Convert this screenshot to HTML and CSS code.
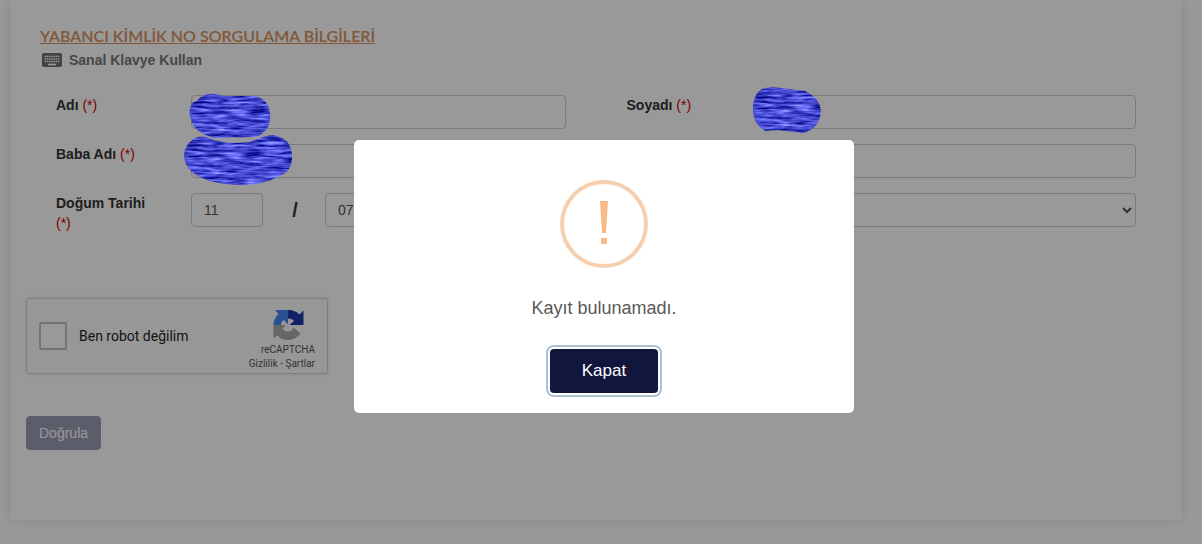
FILE: index.html
```html
<!DOCTYPE html>
<html lang="tr">
<head>
	<meta charset="utf-8">
	<title>Yabancı Kimlik No Sorgulama</title>
	<link rel="stylesheet" href="styles.css">
</head>
<body>

<svg class="defs" width="0" height="0" aria-hidden="true">
	<filter id="paint" x="0" y="0" width="100%" height="100%" color-interpolation-filters="sRGB">
		<feTurbulence type="fractalNoise" baseFrequency="0.05 0.4" numOctaves="3" seed="4" result="noise"/>
		<feColorMatrix in="noise" type="matrix" values="0.9 0 0 0 -0.18  0.9 0 0 0 -0.16  1 0 0 0 0.31  0 0 0 0 1" result="blue"/>
		<feComposite in="blue" in2="SourceGraphic" operator="in"/>
	</filter>
</svg>

<main class="card">
	<h1 class="title">YABANCI KİMLİK NO SORGULAMA BİLGİLERİ</h1>
	<a class="keyboard" href="#">
		<svg width="20" height="14" viewBox="0 0 20 14" aria-hidden="true">
			<rect width="20" height="14" rx="2" fill="#6f6f6f"/>
			<path d="M2.5 3.5h15M2.5 6h15M2.5 8.5h15" stroke="#eee" stroke-width="1.4" stroke-dasharray="1.6 0.6"/>
			<path d="M6 11.5h8" stroke="#fff" stroke-width="1.6"/>
		</svg>
		<span>Sanal Klavye Kullan</span>
	</a>

	<form>
		<div class="fields">
			<div class="field">
				<label for="adi">Adı <em>(*)</em></label>
				<input class="control" type="text" id="adi">
				<svg class="scribble scribble-name" viewBox="0 0 82 48" aria-hidden="true">
					<path d="M8 9Q14 0 27 2Q34 5 44 4L67 4Q79 8 81 20Q83 39 67 45L26 46Q13 43 6 36Q-3 22 3 11Z" filter="url(#paint)"/>
				</svg>
			</div>
			<div class="field">
				<label for="soyadi">Soyadı <em>(*)</em></label>
				<input class="control" type="text" id="soyadi">
				<svg class="scribble scribble-surname" viewBox="0 0 68 46" aria-hidden="true">
					<path d="M9 2Q16 -1 28 1L52 4Q66 10 68 23Q67 42 50 46L25 43L12 44Q-1 36 0 21Q0 7 9 2Z" filter="url(#paint)"/>
				</svg>
			</div>
			<div class="field">
				<label for="baba">Baba Adı <em>(*)</em></label>
				<input class="control" type="text" id="baba">
				<svg class="scribble scribble-father" viewBox="0 0 108 50" aria-hidden="true">
					<path d="M7 6Q13 0 22 2Q40 10 66 7Q78 1 89 0Q107 3 108 20Q109 36 96 41Q79 50 57 50Q27 49 12 40Q0 32 0 21Q0 12 7 6Z" filter="url(#paint)"/>
				</svg>
			</div>
			<div class="field">
				<label for="ana">Ana Adı <em>(*)</em></label>
				<input class="control" type="text" id="ana">
			</div>
			<div class="field">
				<label for="gun">Doğum Tarihi <em>(*)</em></label>
				<div class="date">
					<input class="control" type="text" id="gun" value="11">
					<span>/</span>
					<input class="control" type="text" value="07" aria-label="Ay">
					<span>/</span>
					<input class="control" type="text" aria-label="Yıl">
				</div>
			</div>
			<div class="field">
				<label for="cinsiyet">Cinsiyet <em>(*)</em></label>
				<select class="control" id="cinsiyet"><option></option></select>
			</div>
		</div>

		<div class="captcha">
			<input type="checkbox" id="robot">
			<label for="robot">Ben robot değilim</label>
			<div class="captcha-brand">
				<svg width="32" height="32" viewBox="0 0 64 64" aria-hidden="true">
					<path d="M63 32V3l-8 8A31 31 0 0 0 32 2v17q9 0 12 5l-9 8z" fill="#1c3aa9"/>
					<path d="M32 2H6l7 8A31 31 0 0 0 3 32h15q0-7 6-10l8 9z" fill="#4285f4"/>
					<path d="M3 32v27l7-6a31 31 0 0 0 47-4L43 37q-3 8-12 8-6 0-10-6l7-7z" fill="#ababab"/>
				</svg>
				<span>reCAPTCHA</span>
				<p><a href="#">Gizlilik</a> - <a href="#">Şartlar</a></p>
			</div>
		</div>

		<button class="submit" type="button">Doğrula</button>
	</form>
</main>

<div class="overlay">
	<div class="modal" role="dialog" aria-labelledby="message">
		<svg class="warning" width="88" height="88" viewBox="0 0 88 88" aria-hidden="true">
			<circle cx="44" cy="44" r="42" fill="none" stroke="#f6cfae" stroke-width="4"/>
			<path d="M40 21h8l-2 32h-4zM41 58h6v6h-6z" fill="#f8bb86"/>
		</svg>
		<p id="message">Kayıt bulunamadı.</p>
		<button class="close" type="button">Kapat</button>
	</div>
</div>

</body>
</html>
```
FILE: styles.css
```css
* {
	box-sizing: border-box;
}

body {
	margin: 0;
	padding: 0 21px 24px 11px;
	background: #fdfdfd;
	font: 14px/20px "Liberation Sans", Arial, sans-serif;
	color: #333;
}

.defs {
	position: absolute;
}

.card {
	padding: 26px 15px 70px;
	background: #fff;
	box-shadow: 0 0 10px rgba(0, 0, 0, 0.1);
}

.title {
	margin: 0 14px 4px;
	font: 16px/20px Lato, "Open Sans", sans-serif;
	font-weight: 600;
	color: #d98f5c;
	text-decoration: underline;
}

.keyboard {
	display: flex;
	align-items: center;
	gap: 7px;
	margin: 0 16px 25px;
	font-weight: bold;
	color: #777;
	text-decoration: none;
}

.fields {
	display: grid;
	grid-template-columns: 1fr 1fr;
	gap: 15px 61px;
	padding: 0 30px;
}

.field {
	position: relative;
	display: grid;
	grid-template-columns: 105px 1fr;
	column-gap: 30px;
	align-items: start;
}

.field label {
	font-weight: bold;
}

.field em {
	font-style: normal;
	color: #d40000;
	font-weight: normal;
}

.control {
	width: 100%;
	height: 34px;
	padding: 6px 12px;
	border: 1px solid #ccc;
	border-radius: 4px;
	background: #fff;
	font: inherit;
	color: #555;
}

select.control {
	padding: 6px 0;
}

.date {
	display: flex;
	align-items: center;
}

.date .control {
	width: 72px;
}

.date span {
	width: 62px;
	padding-left: 2px;
	font-size: 20px;
	font-weight: bold;
	text-align: center;
}

/* paint strokes over the filled-in names */
.scribble {
	position: absolute;
	z-index: 20;
}

.scribble-name {
	top: -3px;
	left: 133px;
	width: 82px;
}

.scribble-surname {
	top: -8px;
	left: 126px;
	width: 68px;
}

.scribble-father {
	top: -9px;
	left: 128px;
	width: 108px;
}

.captcha {
	display: flex;
	align-items: center;
	width: 302px;
	height: 76px;
	margin: 65px 0 42px;
	padding: 0 12px;
	border: 1px solid #d3d3d3;
	border-radius: 3px;
	background: #fcfcfc;
	box-shadow: 0 0 4px 1px rgba(0, 0, 0, 0.08);
	font-family: Roboto, sans-serif;
	color: #222;
}

.captcha input {
	appearance: none;
	width: 28px;
	height: 28px;
	margin: 0 12px 0 0;
	border: 2px solid #c1c1c1;
	border-radius: 2px;
	background: #fff;
}

.captcha-brand {
	display: flex;
	flex-direction: column;
	align-items: flex-end;
	margin-left: auto;
	padding-top: 8px;
	font-size: 10px;
	line-height: 14px;
	color: #555;
}

.captcha-brand svg {
	margin: 0 11px 2px 0;
}

.captcha-brand p {
	margin: 0;
}

.captcha-brand a {
	color: inherit;
	text-decoration: none;
}

.submit {
	height: 34px;
	padding: 6px 12px;
	border: 1px solid #9a9cb3;
	border-radius: 4px;
	background: #9a9cb3;
	font: inherit;
	color: #fff;
}

.overlay {
	position: fixed;
	inset: 0;
	z-index: 10;
	display: flex;
	align-items: center;
	justify-content: center;
	padding: 9px 0 0 6px;
	background: rgba(0, 0, 0, 0.4);
}

.modal {
	display: flex;
	flex-direction: column;
	align-items: center;
	width: 500px;
	padding: 40px 20px 20px;
	border-radius: 5px;
	background: #fff;
}

.modal p {
	margin: 28px 0 29px;
	font-size: 18px;
	line-height: 24px;
	color: #595959;
}

.close {
	width: 108px;
	height: 44px;
	border: 0;
	border-radius: 4px;
	background: #11163d;
	box-shadow: 0 0 0 2px #fff, 0 0 0 4px #adc1d5;
	font: inherit;
	font-size: 17px;
	color: #fff;
}
```
